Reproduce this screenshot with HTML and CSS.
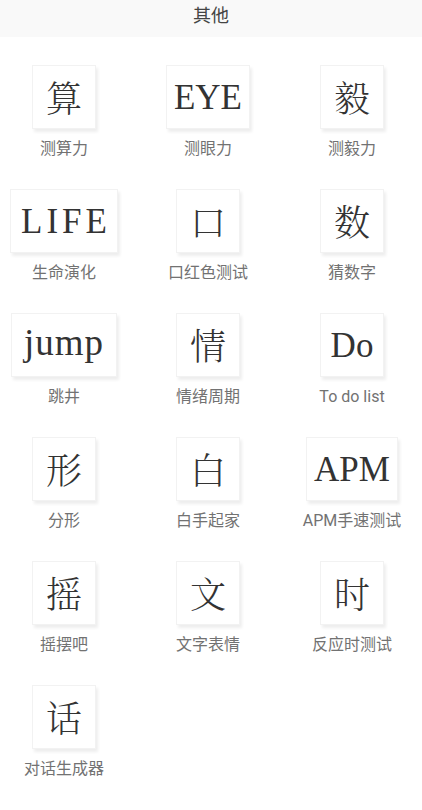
FILE: index.html
```html
<!DOCTYPE html>
<html lang="zh">
<head>
<meta charset="utf-8">
<title>其他</title>
<link rel="stylesheet" href="styles.css">
</head>
<body>
<header class="topbar">其他</header>
<main class="grid">
  <div class="item"><div class="tile cjk">算</div><div class="label">测算力</div></div>
  <div class="item"><div class="tile latin">EYE</div><div class="label">测眼力</div></div>
  <div class="item"><div class="tile cjk">毅</div><div class="label">测毅力</div></div>

  <div class="item"><div class="tile latin wide">LIFE</div><div class="label">生命演化</div></div>
  <div class="item"><div class="tile cjk">口</div><div class="label">口红色测试</div></div>
  <div class="item"><div class="tile cjk">数</div><div class="label">猜数字</div></div>

  <div class="item"><div class="tile latin roomy">jump</div><div class="label">跳井</div></div>
  <div class="item"><div class="tile cjk">情</div><div class="label">情绪周期</div></div>
  <div class="item"><div class="tile latin">Do</div><div class="label">To do list</div></div>

  <div class="item"><div class="tile cjk">形</div><div class="label">分形</div></div>
  <div class="item"><div class="tile cjk">白</div><div class="label">白手起家</div></div>
  <div class="item"><div class="tile latin">APM</div><div class="label">APM手速测试</div></div>

  <div class="item"><div class="tile cjk">摇</div><div class="label">摇摆吧</div></div>
  <div class="item"><div class="tile cjk">文</div><div class="label">文字表情</div></div>
  <div class="item"><div class="tile cjk">时</div><div class="label">反应时测试</div></div>

  <div class="item"><div class="tile cjk">话</div><div class="label">对话生成器</div></div>
</main>
</body>
</html>
```

FILE: styles.css
```css
* { box-sizing: border-box; }

html, body {
  margin: 0;
  padding: 0;
  background: #ffffff;
  font-family: Roboto, "Noto Sans CJK SC", sans-serif;
}

.topbar {
  height: 37px;
  line-height: 29px;
  background: #f9f9f9;
  color: #444444;
  font-family: "Noto Sans CJK SC", sans-serif;
  font-size: 18px;
  font-weight: 400;
  text-align: center;
}

.grid {
  display: grid;
  grid-template-columns: repeat(3, 144px);
  margin-left: -8px;
  padding-top: 28px;
}

.item {
  height: 124px;
  display: flex;
  flex-direction: column;
  align-items: center;
}

.tile {
  min-width: 64px;
  height: 64px;
  padding: 0 7px;
  background: #ffffff;
  border: 1px solid #f2f2f2;
  box-shadow: 2px 3px 3px rgba(0, 0, 0, 0.07);
  display: flex;
  align-items: center;
  justify-content: center;
  color: #333333;
  line-height: 1;
}

.tile.cjk {
  font-family: "Noto Serif CJK SC", "Noto Sans CJK SC", serif;
  font-size: 36px;
  font-weight: 300;
}

.tile.latin {
  font-family: "Liberation Serif", serif;
  font-size: 35px;
  font-weight: 400;
}

.tile.wide {
  letter-spacing: 4px;
  padding: 0 6px 0 10px;
}

.tile.roomy {
  font-size: 37px;
  letter-spacing: 1px;
  padding: 0 12px 6px 12px;
}

.label {
  margin-top: 10px;
  height: 20px;
  line-height: 20px;
  font-size: 16px;
  color: #727272;
  white-space: nowrap;
}
```
